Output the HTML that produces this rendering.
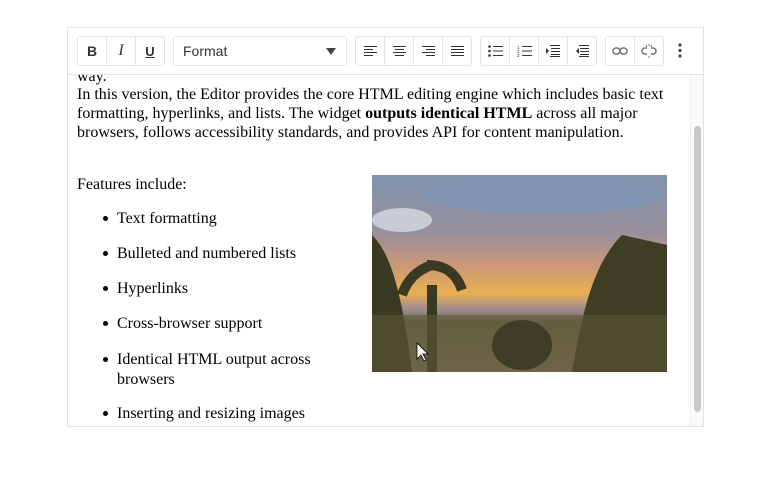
<!DOCTYPE html>
<html><head><meta charset="utf-8"><style>
body{margin:0;width:770px;height:488px;background:#fff;position:relative;overflow:hidden;font-family:"Liberation Serif",serif;font-size:16px;color:#000}
.ed{position:absolute;left:67px;top:27px;width:635px;height:398px;border:1px solid #e2e2e2;overflow:hidden}
.tb{position:absolute;left:0;top:0;width:635px;height:46px;border-bottom:1px solid #e2e2e2;background:#fff;z-index:2}
.grp{position:absolute;top:8px;height:28px;border:1px solid #e2e2e2;border-radius:3px;display:flex}
.grp div{width:28px;height:28px;border-right:1px solid #e2e2e2;display:flex;align-items:center;justify-content:center;font-family:"Liberation Sans",sans-serif;font-size:14px;color:#333}
.grp div:last-child{border-right:none}
.t{position:absolute;white-space:nowrap;line-height:19px}
.li{position:absolute;left:49px;white-space:nowrap;line-height:20px}
.li:before{content:"";position:absolute;left:-14px;top:7px;width:5px;height:5px;border-radius:50%;background:#000}
.sb{position:absolute;left:622px;top:47px;width:13px;height:351px;background:#fafafa;border-left:1px solid #eee}
.th{position:absolute;left:3px;top:51px;width:7px;height:286px;background:#c8c8c8;border-radius:4px}
</style></head><body>
<div class="ed">
<div class="tb">
 <div class="grp" style="left:9px;width:86px"><div style="font-weight:bold">B</div><div style="font-family:'Liberation Serif',serif;font-style:italic;font-size:16px">I</div><div style="text-decoration:underline;font-weight:bold;font-size:13px">U</div></div>
 <div class="grp" style="left:105px;width:172px"><span style="font-family:'Liberation Sans',sans-serif;font-size:14px;color:#333;position:absolute;left:9px;top:6px">Format</span><span style="position:absolute;right:10px;top:11px;border-left:5px solid transparent;border-right:5px solid transparent;border-top:7px solid #444"></span></div>
 <div class="grp" style="left:287px;width:115px">
  <div><svg width="13" height="11"><path d="M0 .5h13M0 3.5h9M0 6.5h13M0 9.5h9" stroke="#333"/></svg></div>
  <div><svg width="13" height="11"><path d="M0 .5h13M2 3.5h9M0 6.5h13M2 9.5h9" stroke="#333"/></svg></div>
  <div><svg width="13" height="11"><path d="M0 .5h13M4 3.5h9M0 6.5h13M4 9.5h9" stroke="#333"/></svg></div>
  <div><svg width="13" height="11"><path d="M0 .5h13M0 3.5h13M0 6.5h13M0 9.5h13" stroke="#333"/></svg></div></div>
 <div class="grp" style="left:412px;width:115px">
  <div><svg width="15" height="12"><circle cx="1.5" cy="1.5" r="1.3" fill="#333"/><circle cx="1.5" cy="6" r="1.3" fill="#333"/><circle cx="1.5" cy="10.5" r="1.3" fill="#333"/><path d="M5 1.5h10M5 6h10M5 10.5h10" stroke="#333"/></svg></div>
  <div><svg width="15" height="12"><text x="0" y="4" font-size="4.5" font-family="Liberation Sans" fill="#333">1</text><text x="0" y="8" font-size="4.5" font-family="Liberation Sans" fill="#333">2</text><text x="0" y="12" font-size="4.5" font-family="Liberation Sans" fill="#333">3</text><path d="M5 1.5h10M5 6h10M5 10.5h10" stroke="#333"/></svg></div>
  <div><svg width="14" height="12"><path d="M0 3l3 3-3 3z" fill="#333"/><path d="M4 .5h10M5 3.5h9M5 6.5h9M5 9.5h9M4 11.5h10" stroke="#333"/></svg></div>
  <div><svg width="14" height="12"><path d="M4 3L1 6l3 3z" fill="#333"/><path d="M4 .5h10M5 3.5h9M5 6.5h9M5 9.5h9M4 11.5h10" stroke="#333"/></svg></div></div>
 <div class="grp" style="left:537px;width:57px">
  <div><svg width="16" height="10"><rect x="1" y="2" width="7" height="6" rx="3" fill="none" stroke="#777" stroke-width="1.6"/><rect x="8" y="2" width="7" height="6" rx="3" fill="none" stroke="#777" stroke-width="1.6"/></svg></div>
  <div><svg width="16" height="14"><path d="M6 4H4a3 3 0 000 6h2M10 4h2a3 3 0 010 6h-2" fill="none" stroke="#777" stroke-width="1.6"/><path d="M8 0v2M8 12v2M5 1l1 2M11 1l-1 2" stroke="#777"/></svg></div></div>
 <svg style="position:absolute;left:609px;top:15px" width="6" height="16"><circle cx="3" cy="2" r="1.6" fill="#444"/><circle cx="3" cy="7.5" r="1.6" fill="#444"/><circle cx="3" cy="13" r="1.6" fill="#444"/></svg>
</div>
<div class="t" style="left:9px;top:39px">way.</div>
<div class="t" style="left:9px;top:57px">In this version, the Editor provides the core HTML editing engine which includes basic text</div>
<div class="t" style="left:9px;top:76px">formatting, hyperlinks, and lists. The widget <b>outputs identical HTML</b> across all major</div>
<div class="t" style="left:9px;top:95px">browsers, follows accessibility standards, and provides API for content manipulation.</div>
<div class="t" style="left:9px;top:147px">Features include:</div>
<div class="li" style="top:181px">Text formatting</div>
<div class="li" style="top:216px">Bulleted and numbered lists</div>
<div class="li" style="top:251px">Hyperlinks</div>
<div class="li" style="top:286px">Cross-browser support</div>
<div class="li" style="top:322px">Identical HTML output across<br>browsers</div>
<div class="li" style="top:376px">Inserting and resizing images</div>
<svg style="position:absolute;left:304px;top:147px" width="295" height="197">
<defs><linearGradient id="g" x1="0" y1="0" x2="0" y2="1">
<stop offset="0" stop-color="#7f93ad"/><stop offset=".3" stop-color="#9a8f9c"/><stop offset=".45" stop-color="#c9967a"/><stop offset=".6" stop-color="#e8b050"/><stop offset=".68" stop-color="#a08a90"/><stop offset=".75" stop-color="#6f6a4a"/><stop offset="1" stop-color="#8a7a60"/></linearGradient></defs>
<rect width="295" height="197" fill="url(#g)"/>
<ellipse cx="170" cy="20" rx="120" ry="18" fill="#7e94b0"/>
<ellipse cx="30" cy="45" rx="30" ry="12" fill="#c8ccd4"/>
<path d="M230 92h40v5h-40z" fill="#f2c030"/>
<path d="M0 60 C20 80 30 120 40 197H0z" fill="#3a3a22"/>
<path d="M250 60 C220 90 210 140 200 197H295V70z" fill="#3d3e24"/>
<path d="M60 197V110M55 90c20 0 30 10 35 25M60 90c-15 5-25 15-30 30" stroke="#3a3a22" stroke-width="10" fill="none"/>
<path d="M0 140h295v57H0z" fill="#5e5638" opacity=".6"/>
<ellipse cx="150" cy="170" rx="30" ry="25" fill="#3e3d26"/>
<path d="M45 168l0 16 4-4 3 6 2-1-3-6 5 0z" fill="#fff" stroke="#000" stroke-width=".8"/>
</svg>
<div class="sb"><div class="th"></div></div>
</div>
</body></html>
